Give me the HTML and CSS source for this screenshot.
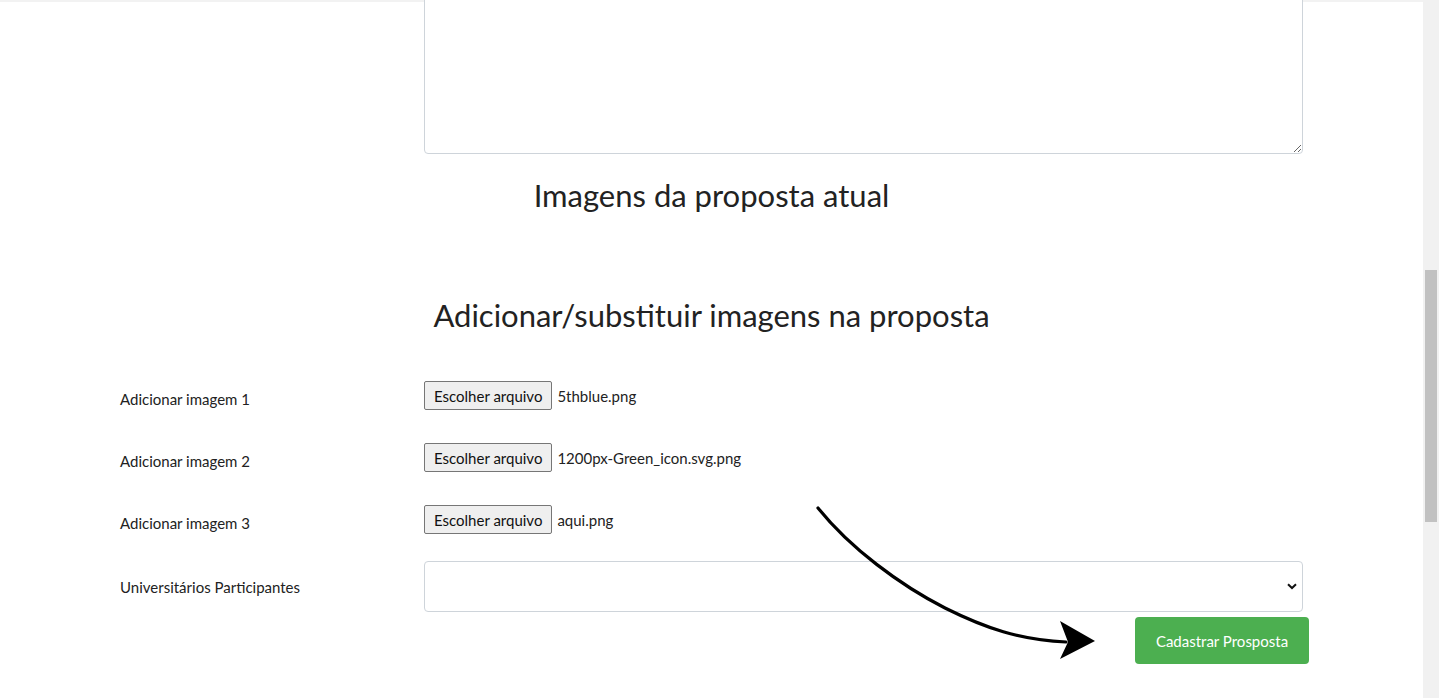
FILE: index.html
```html
<!DOCTYPE html>
<html lang="pt-BR">
<head>
<meta charset="utf-8">
<title>Editar proposta</title>
<link rel="stylesheet" href="styles.css">
</head>
<body>
<div class="page">
  <div class="topbar"></div>
  <form class="form">
    <div class="row row-text">
      <div class="label"></div>
      <textarea class="textarea"></textarea>
    </div>
    <h2 class="title title-current">Imagens da proposta atual</h2>
    <h2 class="title title-add">Adicionar/substituir imagens na proposta</h2>
    <div class="row row-file">
      <label class="label">Adicionar imagem 1</label>
      <div class="file"><span class="file-btn">Escolher arquivo</span><span class="file-name">5thblue.png</span></div>
    </div>
    <div class="row row-file">
      <label class="label">Adicionar imagem 2</label>
      <div class="file"><span class="file-btn">Escolher arquivo</span><span class="file-name">1200px-Green_icon.svg.png</span></div>
    </div>
    <div class="row row-file">
      <label class="label">Adicionar imagem 3</label>
      <div class="file"><span class="file-btn">Escolher arquivo</span><span class="file-name">aqui.png</span></div>
    </div>
    <div class="row row-select">
      <label class="label">Universitários Participantes</label>
      <div class="select">
        <svg class="chev" width="10" height="7" viewBox="0 0 10 7"><path d="M1 1.2 L5 5 L9 1.2" fill="none" stroke="#111" stroke-width="2"/></svg>
      </div>
    </div>
    <div class="actions">
      <button type="button" class="submit">Cadastrar Prosposta</button>
    </div>
  </form>
  <svg class="arrow" width="300" height="170" viewBox="810 500 300 170">
    <path d="M818 508 C 850 548, 900 585, 945 608 C 985 628, 1020 640, 1066 642" fill="none" stroke="#000" stroke-width="3.2" stroke-linecap="round"/>
    <polygon points="1060,621 1095,641 1060,659 1068,642" fill="#000"/>
  </svg>
</div>
<div class="scrollbar"><div class="thumb"></div></div>
</body>
</html>
```

FILE: styles.css
```css
html, body {
  margin: 0;
  height: 100%;
  overflow: hidden;
}
body {
  display: flex;
  background: #fff;
  font-family: "Lato", "Open Sans", sans-serif;
  color: #212529;
}
.page {
  flex: 1;
  position: relative;
  min-width: 0;
}
.topbar {
  height: 2px;
  background: #f2f2f2;
}
.form {
  display: flex;
  flex-direction: column;
  padding-left: 120px;
  width: 1189px;
}
.row {
  display: grid;
  grid-template-columns: 304px 879px;
  align-items: center;
}
.row-text {
  margin-top: -12px;
}
.textarea {
  display: block;
  width: 879px;
  height: 164px;
  box-sizing: border-box;
  border: 1px solid #ced4da;
  border-radius: 4px;
  resize: vertical;
  margin: 0;
  padding: 6px 12px;
  font-family: inherit;
}
.title {
  margin: 0;
  font-weight: 400;
  font-size: 31px;
  line-height: 40px;
  text-align: center;
  margin-left: -120px;
  width: 1423px;
  color: #222;
}
.title-current {
  margin-top: 21px;
}
.title-add {
  margin-top: 80px;
}
.label {
  font-size: 15px;
  color: #222;
  padding-top: 6px;
}
.row-file {
  height: 29px;
  margin-top: 33px;
}
.title-add + .row-file { margin-top: 46px; }
.file {
  display: flex;
  align-items: center;
  font-size: 15px;
  color: #222;
}
.file-btn {
  box-sizing: border-box;
  height: 29px;
  padding: 0 9px;
  display: flex;
  align-items: center;
  background: #efefef;
  border: 1px solid #767676;
  border-radius: 2px;
  color: #111;
  margin-right: 5px;
}
.row-select {
  margin-top: 27px;
}
.row-select .label {
  padding-top: 0;
}
.select {
  box-sizing: border-box;
  height: 51px;
  border: 1px solid #ced4da;
  border-radius: 4px;
  display: flex;
  align-items: center;
  justify-content: flex-end;
  padding-right: 5px;
}
.actions {
  display: flex;
  justify-content: flex-end;
  width: 1189px;
  margin-top: 5px;
}
.submit {
  width: 174px;
  height: 47px;
  background: #4caf50;
  color: #fff;
  border: none;
  border-radius: 4px;
  font-family: inherit;
  font-size: 15px;
}
.arrow {
  position: absolute;
  left: 810px;
  top: 500px;
}
.scrollbar {
  width: 16px;
  flex: none;
  background: #f1f1f1;
  padding: 0 2px;
  box-sizing: border-box;
}
.thumb {
  margin-top: 270px;
  height: 252px;
  background: #c1c1c1;
}
```
